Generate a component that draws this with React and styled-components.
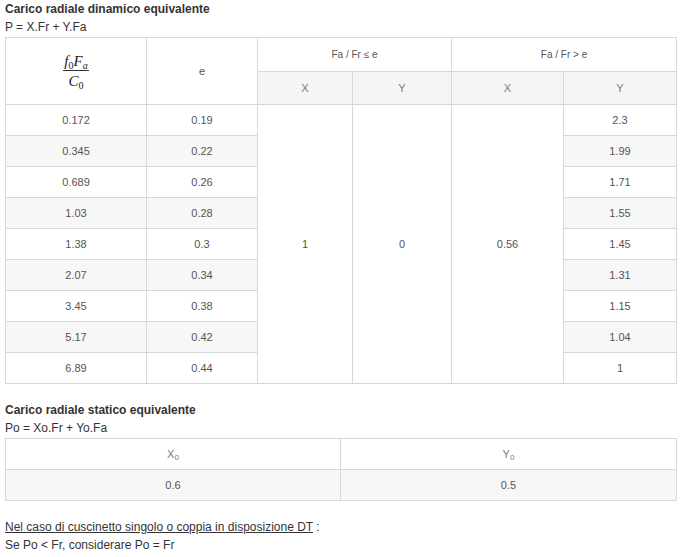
import React from "react";
import styled, { createGlobalStyle } from "styled-components";

const Global = createGlobalStyle`
  html, body { margin: 0; padding: 0; background: #fff; }
  body { font-family: "Liberation Sans", Arial, sans-serif; }
`;

const Page = styled.div`
  padding: 0 5px;
  color: #333;
  font-size: 12px;
  line-height: 18px;
`;

const Section = styled.section`
  & + & { margin-top: 17px; }
`;

const Title = styled.div`
  font-weight: bold;
`;

const Formula = styled.div``;

const Table = styled.table`
  width: 671px;
  border-collapse: collapse;
  table-layout: fixed;
  margin-top: 1px;
  font-size: 11px;
  color: #555;
`;

const Cell = styled.td`
  border: 1px solid #d8d8d8;
  height: 30px;
  padding: 0;
  text-align: center;
  vertical-align: middle;
  line-height: 14px;
  background: ${(p) => (p.$shade ? "#f7f7f7" : "#fff")};
  color: ${(p) => (p.$light ? "#7a7a7a" : "#555")};
  font-size: 11px;
`;

const HeadCell = styled.th`
  border: 1px solid #d8d8d8;
  height: ${(p) => (p.$top ? "33px" : "32px")};
  padding: 0;
  font-weight: normal;
  text-align: center;
  vertical-align: middle;
  line-height: 14px;
  background: ${(p) => (p.$shade ? "#f5f5f5" : "#fff")};
  color: ${(p) => (p.$light ? "#7a7a7a" : "#555")};
  font-size: ${(p) => (p.$small ? "10px" : "11px")};
`;

const Sub = styled.sub`
  font-size: 8px;
  vertical-align: -2px;
  line-height: 0;
`;

const Frac = styled.span`
  display: inline-flex;
  flex-direction: column;
  align-items: center;
  font-family: "Liberation Serif", "Times New Roman", serif;
  font-size: 15px;
  color: #222;
  line-height: 14px;
`;

const Num = styled.span`
  padding: 0 1px 2px;
  border-bottom: 1px solid #333;
`;

const Den = styled.span`
  padding-top: 3px;
`;

const I = styled.i``;
const MSub = styled.sub`
  font-size: 10px;
  vertical-align: -3px;
  line-height: 0;
  font-style: ${(p) => (p.$italic ? "italic" : "normal")};
`;

const Note = styled.div`
  margin-top: 17px;
`;

const Under = styled.span`
  text-decoration: underline;
`;

const rows = [
  ["0.172", "0.19", "2.3"],
  ["0.345", "0.22", "1.99"],
  ["0.689", "0.26", "1.71"],
  ["1.03", "0.28", "1.55"],
  ["1.38", "0.3", "1.45"],
  ["2.07", "0.34", "1.31"],
  ["3.45", "0.38", "1.15"],
  ["5.17", "0.42", "1.04"],
  ["6.89", "0.44", "1"],
];

export default function App() {
  return (
    <Page>
      <Global />
      <Section>
        <Title>Carico radiale dinamico equivalente</Title>
        <Formula>P = X.Fr + Y.Fa</Formula>
        <Table>
          <colgroup>
            <col style={{ width: 141 }} />
            <col style={{ width: 111 }} />
            <col style={{ width: 95 }} />
            <col style={{ width: 99 }} />
            <col style={{ width: 112 }} />
            <col style={{ width: 113 }} />
          </colgroup>
          <thead>
            <tr>
              <HeadCell $top rowSpan={2}>
                <Frac>
                  <Num>
                    <I>f</I>
                    <MSub>0</MSub>
                    <I>F</I>
                    <MSub $italic>a</MSub>
                  </Num>
                  <Den>
                    <I>C</I>
                    <MSub>0</MSub>
                  </Den>
                </Frac>
              </HeadCell>
              <HeadCell $top rowSpan={2}>e</HeadCell>
              <HeadCell $top colSpan={2} $small>Fa / Fr ≤ e</HeadCell>
              <HeadCell $top colSpan={2} $small>Fa / Fr &gt; e</HeadCell>
            </tr>
            <tr>
              {["X", "Y", "X", "Y"].map((h, i) => (
                <HeadCell key={i} $shade $light>{h}</HeadCell>
              ))}
            </tr>
          </thead>
          <tbody>
            {rows.map((r, i) => (
              <tr key={i}>
                <Cell $shade={i % 2 === 1}>{r[0]}</Cell>
                <Cell $shade={i % 2 === 1}>{r[1]}</Cell>
                {i === 0 && (
                  <>
                    <Cell rowSpan={9}>1</Cell>
                    <Cell rowSpan={9}>0</Cell>
                    <Cell rowSpan={9}>0.56</Cell>
                  </>
                )}
                <Cell $shade={i % 2 === 1}>{r[2]}</Cell>
              </tr>
            ))}
          </tbody>
        </Table>
      </Section>
      <Section>
        <Title>Carico radiale statico equivalente</Title>
        <Formula>Po = Xo.Fr + Yo.Fa</Formula>
        <Table>
          <colgroup>
            <col style={{ width: 335 }} />
            <col style={{ width: 336 }} />
          </colgroup>
          <tbody>
            <tr>
              <Cell $light>X<Sub>0</Sub></Cell>
              <Cell $light>Y<Sub>0</Sub></Cell>
            </tr>
            <tr>
              <Cell $shade>0.6</Cell>
              <Cell $shade>0.5</Cell>
            </tr>
          </tbody>
        </Table>
      </Section>
      <Note>
        <div><Under>Nel caso di cuscinetto singolo o coppia in disposizione DT</Under> :</div>
        <div>Se Po &lt; Fr, considerare Po = Fr</div>
      </Note>
    </Page>
  );
}
